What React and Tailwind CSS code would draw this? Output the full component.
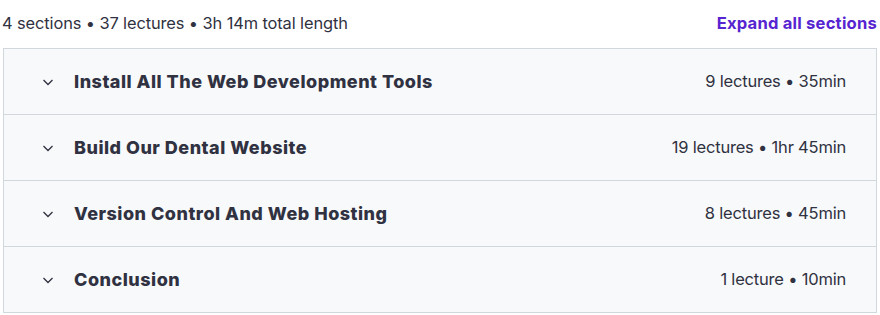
const SECTIONS = [
  { title: 'Install All The Web Development Tools', meta: '9 lectures • 35min' },
  { title: 'Build Our Dental Website', meta: '19 lectures • 1hr 45min' },
  { title: 'Version Control And Web Hosting', meta: '8 lectures • 45min' },
  { title: 'Conclusion', meta: '1 lecture • 10min' },
];

function Chevron() {
  return (
    <svg width="12" height="12" viewBox="0 0 12 12" fill="none" className="shrink-0">
      <path d="M1.5 4l4.5 4.5L10.5 4" stroke="#303141" strokeWidth="1.3" />
    </svg>
  );
}

export default function App() {
  return (
    <div className="w-[880px] h-[315px] bg-white text-[#303141]" style={{ fontFamily: 'Inter, "Noto Sans", sans-serif' }}>
      <div className="flex h-12 items-start justify-between pl-[2px] pr-[3px] pt-[11px]">
        <span className="text-[16.4px] leading-[24px] tracking-[-0.1px]">
          4 sections • 37 lectures • 3h 14m total length
        </span>
        <button className="text-[16.6px] font-bold leading-[24px] text-[#5624d0] tracking-[0.2px]">
          Expand all sections
        </button>
      </div>
      <div className="mx-[3px] border border-[#d1d7dc]">
        {SECTIONS.map((s, i) => (
          <div
            key={s.title}
            className={`flex items-center bg-[#f7f9fa] pl-[38px] pr-[30px] ${i > 0 ? 'h-[66px] border-t border-[#d1d7dc]' : 'h-[65px]'}`}
          >
            <Chevron />
            <span className="ml-[20px] text-[18px] font-extrabold tracking-[0.5px]">{s.title}</span>
            <span className="ml-auto text-[16.5px] tracking-[-0.2px]">{s.meta}</span>
          </div>
        ))}
      </div>
    </div>
  );
}
